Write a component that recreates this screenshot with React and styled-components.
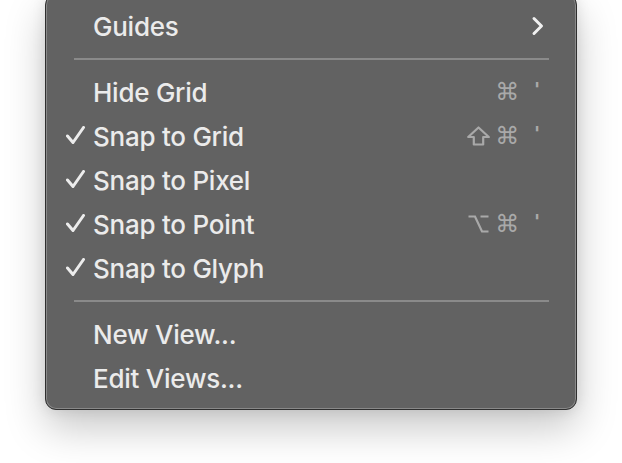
import React from "react";
import styled, { createGlobalStyle } from "styled-components";

const Global = createGlobalStyle`
  html, body { margin: 0; padding: 0; background: #ffffff; }
  body { width: 622px; height: 463px; overflow: hidden; font-family: Inter, "Noto Sans", sans-serif; }
`;

const Menu = styled.div`
  box-sizing: border-box;
  width: 532px;
  margin: -6px 0 0 45px;
  padding: 9px 0 9px;
  background: #626262;
  border: 1px solid #2f2f2f;
  border-radius: 11px;
  box-shadow: inset 0 0 0 1px #898989, 0 18px 40px rgba(0, 0, 0, 0.22), 0 0 14px rgba(0, 0, 0, 0.1);
  display: flex;
  flex-direction: column;
`;

const Row = styled.div`
  display: flex;
  align-items: center;
  height: 44px;
  padding: 0 27px 0 20px;
  color: #ebebeb;
  font-size: 26px;
  font-weight: 450;
  letter-spacing: -0.25px;
`;

const CheckCol = styled.span`
  width: 27px;
  flex: none;
  display: flex;
  align-items: center;
  justify-content: flex-start;
`;

const Label = styled.span`
  flex: 1;
  white-space: nowrap;
`;

const Mods = styled.span`
  display: flex;
  align-items: center;
  gap: 5px;
  color: #a9a9a9;
  font-family: "DejaVu Sans", sans-serif;
  font-size: 24px;
  line-height: 1;
`;

const KeySlot = styled.span`
  width: 22px;
  margin-left: 8px;
  padding-left: 7px;
  box-sizing: border-box;
  color: #a9a9a9;
  font-family: "DejaVu Sans", sans-serif;
  font-weight: bold;
  font-size: 20px;
  display: flex;
  align-items: center;
  justify-content: flex-start;
  align-self: stretch;
  padding-bottom: 7px;
`;

const Separator = styled.div`
  height: 22px;
  display: flex;
  align-items: center;
  padding: 0 27px 0 28px;
  &::after {
    content: "";
    flex: 1;
    height: 2px;
    background: #8a8a8a;
  }
`;

const ChevSlot = styled.span`
  width: 22px;
  margin-left: 8px;
  display: flex;
  align-items: center;
  justify-content: flex-start;
  padding-left: 4px;
  box-sizing: border-box;
`;

const Check = () => (
  <svg width="20" height="20" viewBox="0 0 20 20">
    <polyline points="1.5,10 7,16.5 17.5,1.5" fill="none" stroke="#ececec" strokeWidth="3" strokeLinecap="round" strokeLinejoin="round" />
  </svg>
);

const Chevron = () => (
  <svg width="14" height="20" viewBox="0 0 14 20">
    <polyline points="3,2.5 10.5,10 3,17.5" fill="none" stroke="#f0f0f0" strokeWidth="3" strokeLinecap="round" strokeLinejoin="round" />
  </svg>
);

const ShiftIcon = () => (
  <svg width="23" height="20" viewBox="0 0 23 20" aria-label="Shift">
    <path d="M11.5 1.5 L21.8 11 L16.2 11 L16.2 18.5 L6.8 18.5 L6.8 11 L1.2 11 Z" fill="none" stroke="#a9a9a9" strokeWidth="2.2" strokeLinejoin="round" />
  </svg>
);

const OptionIcon = () => (
  <svg width="23" height="20" viewBox="0 0 23 20" aria-label="Option">
    <path d="M1.5 2.5 H8 L15 17.5 H21.5 M13.5 2.5 H21.5" fill="none" stroke="#a9a9a9" strokeWidth="2.2" strokeLinejoin="miter" />
  </svg>
);

const modIcons = { "⇧": ShiftIcon, "⌥": OptionIcon };

const items = [
  { label: "Guides", sub: true },
  { sep: true },
  { label: "Hide Grid", mods: ["⌘"], key: "'" },
  { label: "Snap to Grid", checked: true, mods: ["⇧", "⌘"], key: "'" },
  { label: "Snap to Pixel", checked: true },
  { label: "Snap to Point", checked: true, mods: ["⌥", "⌘"], key: "'" },
  { label: "Snap to Glyph", checked: true },
  { sep: true },
  { label: "New View..." },
  { label: "Edit Views..." },
];

export default function App() {
  return (
    <>
      <Global />
      <Menu>
        {items.map((it, i) =>
          it.sep ? (
            <Separator key={i} />
          ) : (
            <Row key={i}>
              <CheckCol>{it.checked && <Check />}</CheckCol>
              <Label>{it.label}</Label>
              {it.mods && (
                <Mods>
                  {it.mods.map((m) => {
                    const Icon = modIcons[m];
                    return Icon ? <Icon key={m} /> : <span key={m}>{m}</span>;
                  })}
                </Mods>
              )}
              {it.key && <KeySlot>{it.key}</KeySlot>}
              {it.sub && (
                <ChevSlot>
                  <Chevron />
                </ChevSlot>
              )}
            </Row>
          )
        )}
      </Menu>
    </>
  );
}
